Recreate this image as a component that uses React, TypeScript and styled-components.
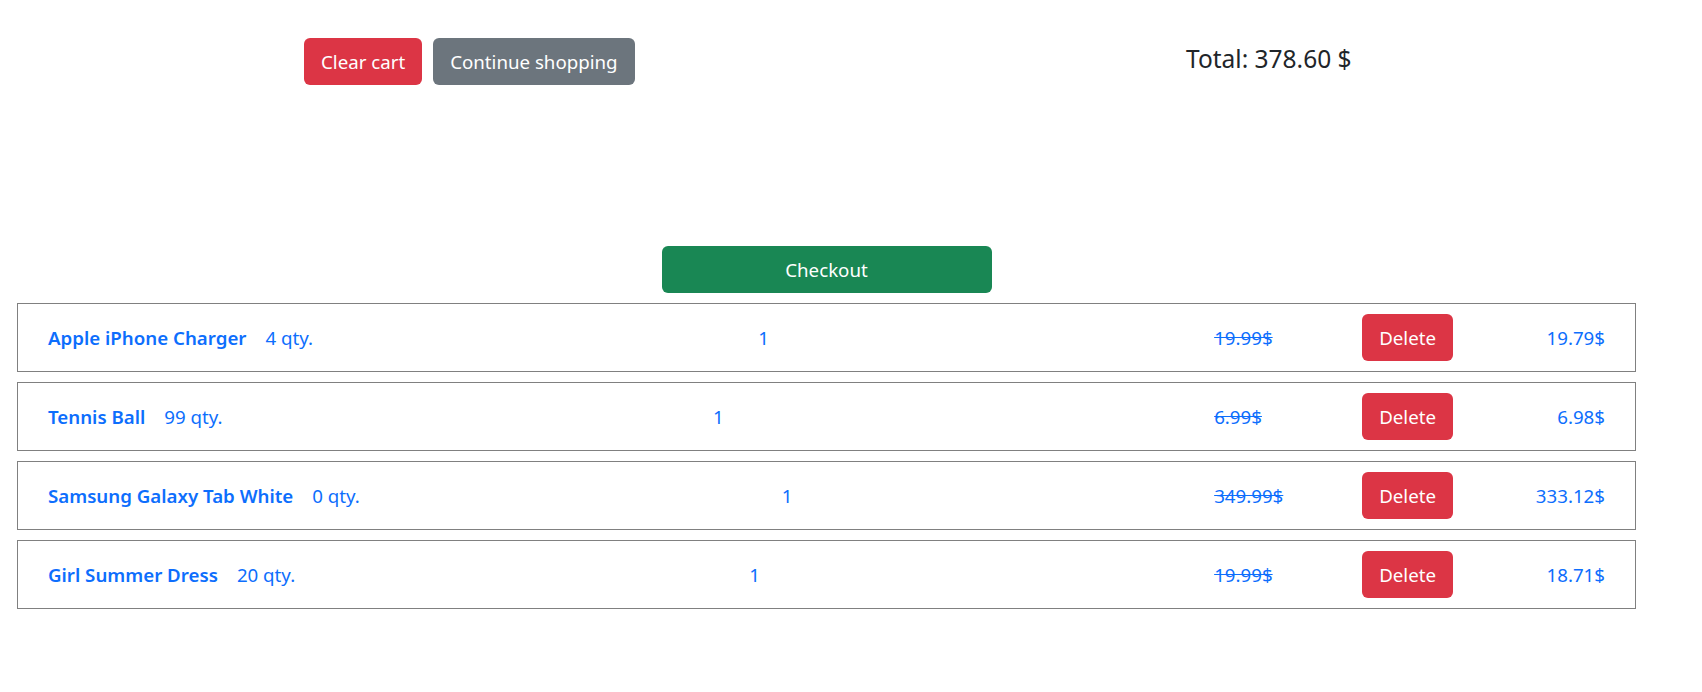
import React from "react";
import styled, { createGlobalStyle } from "styled-components";

const Global = createGlobalStyle`
  body {
    margin: 0;
    background: #fff;
    font-family: "Noto Sans", "Open Sans", sans-serif;
    color: #212529;
  }
`;

const Page = styled.div`
  padding: 0 66px 40px 17px;
`;

const TopBar = styled.div`
  display: grid;
  grid-template-columns: 882px auto;
  align-items: center;
  padding: 38px 0 0 287px;
`;

const ButtonGroup = styled.div`
  display: flex;
  gap: 11px;
`;

const Btn = styled.button<{ $variant: "danger" | "secondary" | "success" }>`
  font-family: inherit;
  font-size: 18.7px;
  line-height: 29px;
  padding: 8px 16px;
  border: 1px solid transparent;
  border-radius: 6px;
  color: #fff;
  cursor: pointer;
  background: ${(p) =>
    p.$variant === "danger" ? "#dc3545" : p.$variant === "secondary" ? "#6c757d" : "#198754"};
`;

const Total = styled.h4`
  margin: 0 0 6px 0;
  font-size: 24.5px;
  font-weight: 400;
  color: #212529;
`;

const CheckoutWrap = styled.div`
  display: flex;
  justify-content: center;
  margin-top: 161px;
`;

const CheckoutBtn = styled(Btn)`
  width: 330px;
`;

const List = styled.div`
  display: flex;
  flex-direction: column;
  gap: 10px;
  margin-top: 10px;
`;

const Row = styled.div`
  display: flex;
  align-items: center;
  justify-content: space-between;
  border: 1px solid #808080;
  padding: 10px 30px;
  font-size: 18.7px;
  color: #0d6efd;
`;

const NameGroup = styled.div`
  display: flex;
  gap: 19px;
  align-items: baseline;
`;

const Name = styled.span`
  font-weight: 600;
`;

const Qty = styled.span``;

const Count = styled.span``;

const RightGroup = styled.div`
  display: grid;
  grid-template-columns: 148px auto 152px;
  align-items: center;
`;

const OldPrice = styled.span`
  text-decoration: line-through;
`;

const FinalPrice = styled.span`
  text-align: right;
`;

const items = [
  { name: "Apple iPhone Charger", qty: 4, old: "19.99$", price: "19.79$" },
  { name: "Tennis Ball", qty: 99, old: "6.99$", price: "6.98$" },
  { name: "Samsung Galaxy Tab White", qty: 0, old: "349.99$", price: "333.12$" },
  { name: "Girl Summer Dress", qty: 20, old: "19.99$", price: "18.71$" },
];

export default function App() {
  return (
    <>
      <Global />
      <Page>
        <TopBar>
          <ButtonGroup>
            <Btn $variant="danger">Clear cart</Btn>
            <Btn $variant="secondary">Continue shopping</Btn>
          </ButtonGroup>
          <Total>Total: 378.60 $</Total>
        </TopBar>
        <CheckoutWrap>
          <CheckoutBtn $variant="success">Checkout</CheckoutBtn>
        </CheckoutWrap>
        <List>
          {items.map((it) => (
            <Row key={it.name}>
              <NameGroup>
                <Name>{it.name}</Name>
                <Qty>{it.qty} qty.</Qty>
              </NameGroup>
              <Count>1</Count>
              <RightGroup>
                <OldPrice>{it.old}</OldPrice>
                <Btn $variant="danger">Delete</Btn>
                <FinalPrice>{it.price}</FinalPrice>
              </RightGroup>
            </Row>
          ))}
        </List>
      </Page>
    </>
  );
}
